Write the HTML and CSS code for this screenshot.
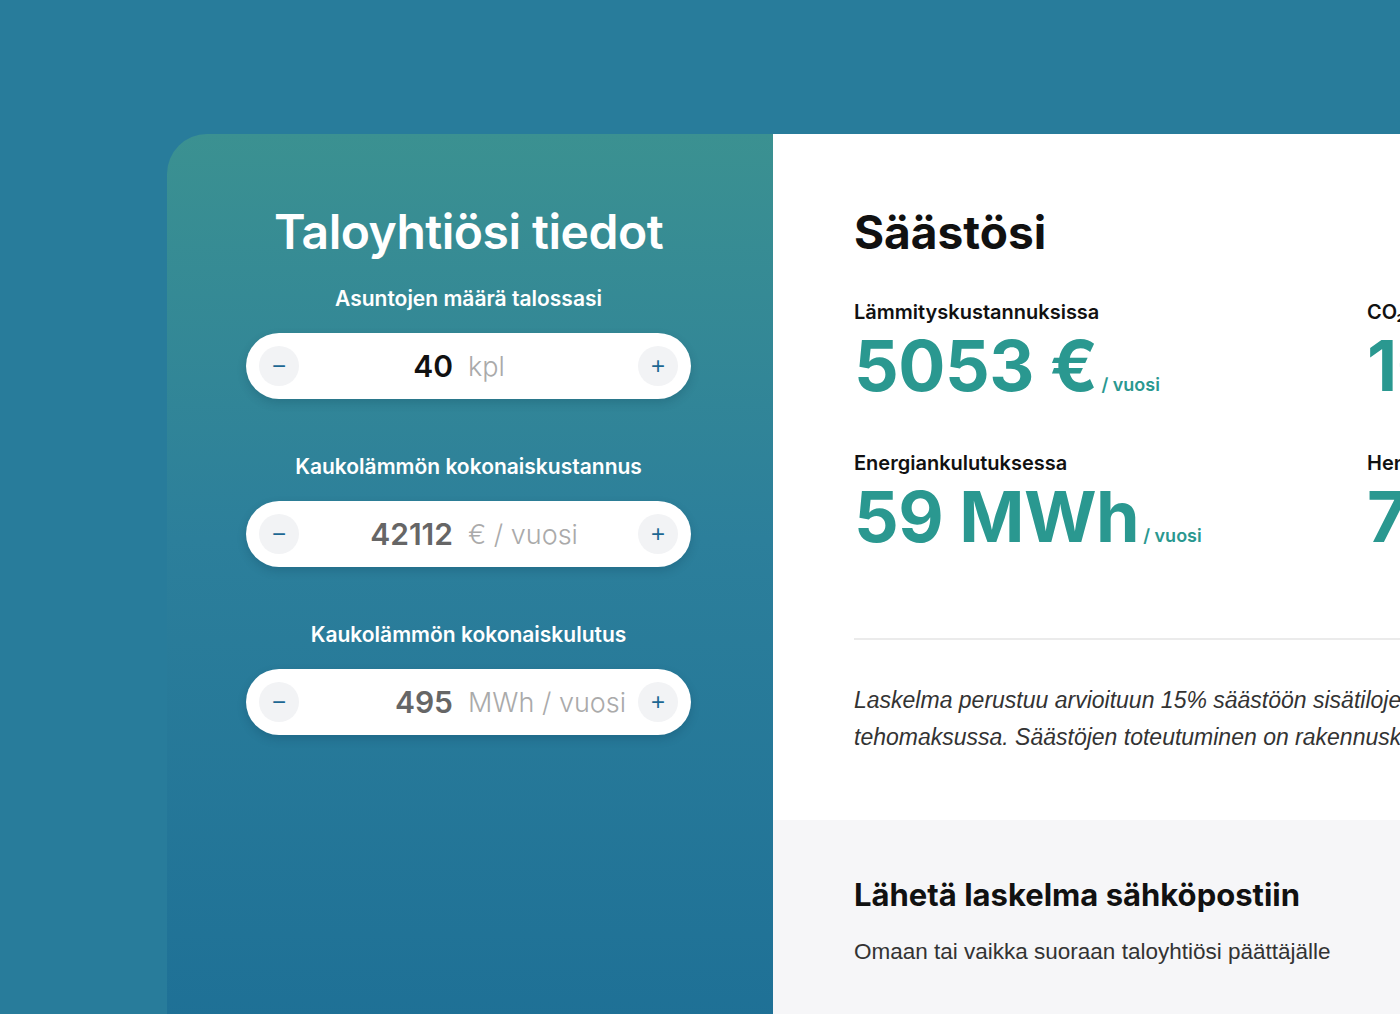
FILE: index.html
```html
<!DOCTYPE html>
<html lang="fi">
<head>
  <meta charset="UTF-8">
  <meta name="viewport" content="width=device-width, initial-scale=1.0">
  <title>Säästölaskuri</title>
  <link rel="stylesheet" href="styles.css">
</head>
<body>
  <div class="page">
    <div class="calculator">

      <section class="inputs">
        <h2 class="inputs-title">Taloyhtiösi tiedot</h2>

        <div class="field">
          <label class="field-label">Asuntojen määrä talossasi</label>
          <div class="stepper">
            <button class="step" type="button">&minus;</button>
            <span class="step-value dark">40</span>
            <span class="step-unit">kpl</span>
            <button class="step" type="button">+</button>
          </div>
        </div>

        <div class="field">
          <label class="field-label">Kaukolämmön kokonaiskustannus</label>
          <div class="stepper">
            <button class="step" type="button">&minus;</button>
            <span class="step-value">42112</span>
            <span class="step-unit">€ / vuosi</span>
            <button class="step" type="button">+</button>
          </div>
        </div>

        <div class="field">
          <label class="field-label">Kaukolämmön kokonaiskulutus</label>
          <div class="stepper">
            <button class="step" type="button">&minus;</button>
            <span class="step-value">495</span>
            <span class="step-unit">MWh / vuosi</span>
            <button class="step" type="button">+</button>
          </div>
        </div>
      </section>

      <section class="results">
        <div class="results-main">
          <h2 class="results-title">Säästösi</h2>

          <div class="stats">
            <div class="stat">
              <div class="stat-label">Lämmityskustannuksissa</div>
              <div class="stat-value">5053 €<span class="stat-per">/ vuosi</span></div>
            </div>
            <div class="stat">
              <div class="stat-label">CO₂-päästöissä</div>
              <div class="stat-value">16 t<span class="stat-per">/ vuosi</span></div>
            </div>
            <div class="stat">
              <div class="stat-label">Energiankulutuksessa</div>
              <div class="stat-value">59 MWh<span class="stat-per">/ vuosi</span></div>
            </div>
            <div class="stat">
              <div class="stat-label">Henkilöä kohden</div>
              <div class="stat-value">7 %<span class="stat-per">/ vuosi</span></div>
            </div>
          </div>

          <p class="note">Laskelma perustuu arvioituun 15% säästöön sisätilojen lämmityksessä ja tehomaksussa. Säästöjen toteutuminen on rakennuskohtaista.</p>
        </div>

        <div class="send">
          <h3 class="send-title">Lähetä laskelma sähköpostiin</h3>
          <p class="send-text">Omaan tai vaikka suoraan taloyhtiösi päättäjälle</p>
        </div>
      </section>

    </div>
  </div>
</body>
</html>
```

FILE: styles.css
```css
html, body {
  margin: 0;
  height: 100%;
}
body {
  background-color: #287c9b;
  font-family: Inter, "Liberation Sans", sans-serif;
  overflow: hidden;
}
.page {
  padding: 134px 0 0 167px;
}
.calculator {
  display: flex;
  width: 1500px;
  height: 900px;
}

/* left: inputs */
.inputs {
  flex: none;
  width: 606px;
  border-top-left-radius: 40px;
  background: linear-gradient(180deg, #3b9191 0%, #2c7f9b 45%, #1e7096 100%);
  padding: 68px 3px 0 0;
  box-sizing: border-box;
  display: flex;
  flex-direction: column;
  align-items: center;
}
.inputs-title {
  margin: 0 0 23px;
  color: white;
  font-size: 48px;
  font-weight: 600;
  letter-spacing: -0.5px;
  line-height: 60px;
}
.field {
  display: flex;
  flex-direction: column;
  align-items: center;
  margin-bottom: 54px;
}
.field-label {
  color: white;
  font-size: 21px;
  font-weight: 600;
  line-height: 28px;
  margin-bottom: 20px;
}
.stepper {
  width: 445px;
  height: 66px;
  box-sizing: border-box;
  padding: 0 13px;
  background: white;
  border-radius: 33px;
  box-shadow: 0 4px 10px rgba(0, 40, 60, 0.18);
  display: flex;
  align-items: center;
}
.step {
  flex: none;
  width: 40px;
  height: 40px;
  border: none;
  border-radius: 50%;
  background-color: #f2f3f5;
  color: #1d6792;
  font-family: "Liberation Sans", sans-serif;
  font-size: 24px;
  line-height: 40px;
  padding: 0;
  cursor: pointer;
}
.step-value {
  width: 154px;
  text-align: right;
  font-size: 30px;
  font-weight: 600;
  color: #666;
}
.step-value.dark {
  color: #111;
}
.step-unit {
  flex: 1;
  margin-left: 15px;
  font-size: 27px;
  font-weight: 300;
  color: #aaa;
}

/* right: results */
.results {
  flex: none;
  width: 894px;
  background: white;
  display: flex;
  flex-direction: column;
}
.results-main {
  padding: 68px 0 0 81px;
  height: 686px;
  box-sizing: border-box;
}
.results-title {
  margin: 0 0 36px;
  color: #111;
  font-size: 46px;
  font-weight: 700;
  line-height: 60px;
}
.stats {
  display: grid;
  grid-template-columns: 513px 513px;
  row-gap: 24px;
  padding-bottom: 62px;
  border-bottom: 2px solid #ebebeb;
}
.stat-label {
  font-size: 20px;
  font-weight: 600;
  color: #111;
  line-height: 28px;
  white-space: nowrap;
}
.stat-value {
  font-size: 70px;
  font-weight: 700;
  color: #2a9890;
  line-height: 80px;
  letter-spacing: -0.5px;
  white-space: nowrap;
}
.stat-per {
  font-size: 18px;
  font-weight: 600;
  margin-left: 4px;
  letter-spacing: 0;
}
.note {
  margin: 42px 0 0;
  font-family: "Liberation Sans", sans-serif;
  font-style: italic;
  font-size: 23px;
  line-height: 37px;
  color: #333;
  width: 780px;
}
.send {
  flex: 1;
  background-color: #f6f6f8;
  padding: 55px 0 0 81px;
}
.send-title {
  margin: 0;
  font-size: 31px;
  font-weight: 700;
  color: #111;
  line-height: 40px;
}
.send-text {
  margin: 24px 0 0;
  font-family: "Liberation Sans", sans-serif;
  font-size: 22.5px;
  color: #333;
}
```
